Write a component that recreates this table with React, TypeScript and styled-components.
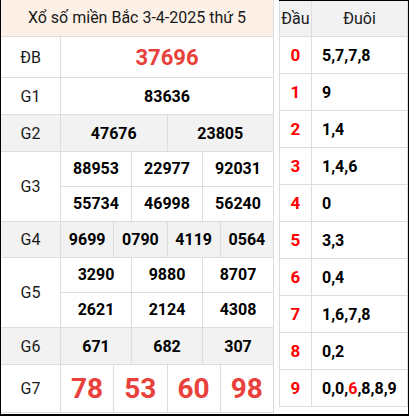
import React from 'react';
import styled, { createGlobalStyle } from 'styled-components';

const Global = createGlobalStyle`
  html, body { margin: 0; padding: 0; background: #fff; }
  body { font-family: Roboto, "Noto Sans", Arial, sans-serif; color: #111; }
  * { box-sizing: border-box; }
`;

const Frame = styled.div`
  width: 409px;
  height: 416px;
  border-left: 1px solid #000;
  border-right: 1px solid #000;
  border-bottom: 2px solid #000;
  display: flex;
  gap: 5px;
  align-items: flex-start;
`;

const LeftTable = styled.div`
  width: 273px;
  display: flex;
  flex-direction: column;
`;

const Title = styled.div`
  height: 37px;
  background: #fdf1e7;
  border-right: 1px solid #ddd;
  border-bottom: 1px solid #ddd;
  display: flex;
  align-items: center;
  justify-content: center;
  font-size: 16px;
  color: #1a1a1a;
  padding-bottom: 1px;
`;

const Row = styled.div<{ $h: number; $alt?: boolean }>`
  height: ${(p) => p.$h}px;
  display: grid;
  grid-template-columns: 60px 1fr;
  background: ${(p) => (p.$alt ? '#f2f2f2' : '#fff')};
  border-bottom: 1px solid #ddd;
`;

const Label = styled.div`
  border-right: 1px solid #ddd;
  display: flex;
  align-items: center;
  justify-content: center;
  font-size: 16px;
  color: #1a1a1a;
`;

const Prizes = styled.div<{ $cols: number; $rows?: number }>`
  display: grid;
  grid-template-columns: repeat(${(p) => p.$cols}, 1fr);
  grid-template-rows: repeat(${(p) => p.$rows ?? 1}, 1fr);
`;

const Num = styled.div<{ $size?: number; $red?: boolean; $line?: boolean }>`
  border-right: 1px solid #ddd;
  border-bottom: ${(p) => (p.$line ? '1px solid #ddd' : 'none')};
  display: flex;
  align-items: center;
  justify-content: center;
  font-weight: 700;
  font-size: ${(p) => p.$size ?? 16}px;
  color: ${(p) => (p.$red ? '#e8413b' : '#000')};
`;

const RightTable = styled.div`
  width: 129px;
  border-top: 1px solid #000;
  display: flex;
  flex-direction: column;
`;

const RRow = styled.div<{ $h: number; $head?: boolean }>`
  height: ${(p) => p.$h}px;
  display: grid;
  grid-template-columns: 32px 1fr;
  border-left: 1px solid #ddd;
  border-bottom: 1px solid #ddd;
  background: ${(p) => (p.$head ? '#f2f2f2' : '#fff')};
`;

const HeadCell = styled.div`
  border-right: 1px solid #ddd;
  display: flex;
  align-items: center;
  justify-content: center;
  font-size: 16px;
  color: #1a1a1a;
`;

const Dau = styled.div`
  border-right: 1px solid #ddd;
  display: flex;
  align-items: center;
  justify-content: center;
  font-weight: 700;
  font-size: 17px;
  color: #f00;
`;

const Duoi = styled.div`
  border-right: 1px solid #ddd;
  display: flex;
  align-items: center;
  padding-left: 10px;
  font-weight: 700;
  font-size: 16px;
  color: #000;
`;

const Hi = styled.span`
  color: #f00;
`;

type Prize = { label: string; h: number; alt?: boolean; cols: number; nums: string[]; size?: number; red?: boolean };

const prizes: Prize[] = [
  { label: 'ĐB', h: 41, cols: 1, nums: ['37696'], size: 22, red: true },
  { label: 'G1', h: 37, cols: 1, nums: ['83636'] },
  { label: 'G2', h: 37, alt: true, cols: 2, nums: ['47676', '23805'] },
  { label: 'G3', h: 70, cols: 3, nums: ['88953', '22977', '92031', '55734', '46998', '56240'] },
  { label: 'G4', h: 36, alt: true, cols: 4, nums: ['9699', '0790', '4119', '0564'] },
  { label: 'G5', h: 70, cols: 3, nums: ['3290', '9880', '8707', '2621', '2124', '4308'] },
  { label: 'G6', h: 37, alt: true, cols: 3, nums: ['671', '682', '307'] },
  { label: 'G7', h: 48, cols: 4, nums: ['78', '53', '60', '98'], size: 28, red: true },
];

const loto: { d: string; t: React.ReactNode }[] = [
  { d: '0', t: '5,7,7,8' },
  { d: '1', t: '9' },
  { d: '2', t: '1,4' },
  { d: '3', t: '1,4,6' },
  { d: '4', t: '0' },
  { d: '5', t: '3,3' },
  { d: '6', t: '0,4' },
  { d: '7', t: '1,6,7,8' },
  { d: '8', t: '0,2' },
  { d: '9', t: <>0,0,<Hi>6</Hi>,8,8,9</> },
];

export default function App() {
  return (
    <>
      <Global />
      <Frame>
        <LeftTable>
          <Title>Xổ số miền Bắc 3-4-2025 thứ 5</Title>
          {prizes.map((p) => {
            const rows = p.nums.length / p.cols;
            return (
              <Row key={p.label} $h={p.h} $alt={p.alt}>
                <Label>{p.label}</Label>
                <Prizes $cols={p.cols} $rows={rows}>
                  {p.nums.map((n, i) => (
                    <Num key={i} $size={p.size} $red={p.red} $line={rows > 1 && i < p.cols}>
                      {n}
                    </Num>
                  ))}
                </Prizes>
              </Row>
            );
          })}
        </LeftTable>
        <RightTable>
          <RRow $h={36} $head>
            <HeadCell>Đầu</HeadCell>
            <HeadCell>Đuôi</HeadCell>
          </RRow>
          {loto.map((l) => (
            <RRow key={l.d} $h={37}>
              <Dau>{l.d}</Dau>
              <Duoi>{l.t}</Duoi>
            </RRow>
          ))}
        </RightTable>
      </Frame>
    </>
  );
}
